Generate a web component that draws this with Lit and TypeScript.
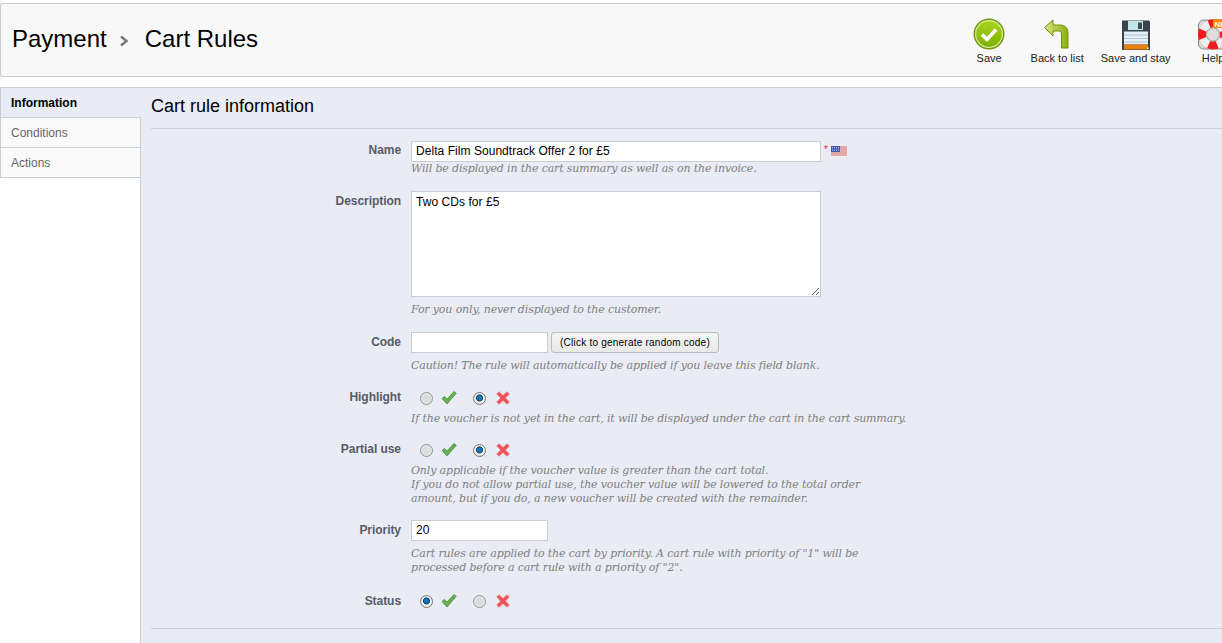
import { LitElement, html, css, svg } from "lit";
import { customElement } from "lit/decorators.js";

const saveIcon = svg`<svg class="ico" width="32" height="32" viewBox="0 0 32 32">
<defs><linearGradient id="sg" x1="0" y1="0" x2="0" y2="1"><stop offset="0" stop-color="#a9d21c"/><stop offset="1" stop-color="#7fb000"/></linearGradient></defs>
<circle cx="16" cy="16" r="15.500" fill="#6d9a0a"/><circle cx="16" cy="16" r="14" fill="#d8e9a0"/><circle cx="16" cy="16" r="12.800" fill="url(#sg)"/>
<path d="M9 16.500l5 5 9-10" fill="none" stroke="#fff" stroke-width="3.600"/></svg>`;
const backIcon = svg`<svg class="ico" width="32" height="32" viewBox="0 0 32 32">
<defs><linearGradient id="bg" x1="0" y1="0" x2="1" y2="0"><stop offset="0" stop-color="#d6e680"/><stop offset="1" stop-color="#88b010"/></linearGradient></defs>
<path d="M3.500 9.500L12 2v5h7c5 0 8 3 8 8v15h-6.500V16c0-2-1-3-3-3H12v5z" fill="url(#bg)" stroke="#6f8f10" stroke-width="1"/></svg>`;
const diskIcon = svg`<svg class="ico" width="32" height="32" viewBox="0 0 32 32"><g transform="translate(0 1.500)">
<path d="M2 1h27l1 1v28l-1 1H3l-1-1z" fill="#3a424c"/>
<rect x="8" y="1.500" width="15" height="9" fill="#bfe6ea"/><rect x="18" y="3" width="4" height="6.500" fill="#3f4a52"/>
<rect x="4" y="12" width="24" height="13" fill="#e6eef6"/>
<path d="M4 15.500h24M4 19h24M4 22.500h24" stroke="#a9c2de" stroke-width="1"/>
<rect x="4" y="25" width="24" height="5" fill="#e8820e"/>
<rect x="27" y="28" width="1.500" height="1.500" fill="#fff"/></g></svg>`;
const helpIcon = svg`<svg class="ico" width="32" height="32" viewBox="0 0 32 32">
<rect x="1.500" y="2" width="29" height="29" rx="5" fill="#d9d9d9" stroke="#8a8a8a"/>
<circle cx="16" cy="16.500" r="11" fill="none" stroke="#ee1c1c" stroke-width="8"/>
<circle cx="16" cy="16.500" r="11" fill="none" stroke="#eee" stroke-width="8" stroke-dasharray="8.640 8.640" stroke-dashoffset="-4.320"/>
<circle cx="16" cy="16.500" r="6.500" fill="#dcdcdc" stroke="#a8a8a8" stroke-width="1"/>
<rect x="16" y="1" width="16" height="9" rx="1.500" fill="#f58a00"/>
<text x="17.500" y="8.500" font-family="Liberation Sans" font-weight="700" font-size="8" fill="#fff">NEW</text></svg>`;
const checkIcon = svg`<svg class="mark" width="16" height="14" viewBox="0 0 16 14"><path d="M1 7.500l2.500-2L6 8l7-7.500 2.300 1.800L6 13z" fill="#62b14e" stroke="#4e8f3c" stroke-width=".8"/></svg>`;
const crossIcon = svg`<svg class="x" width="14" height="14" viewBox="0 0 14 14"><path d="M3 .7L7 4.600 11 .7l2.300 2.300L9.400 7l3.900 4-2.300 2.300L7 9.400l-4 3.900L.7 11l3.900-4L.7 3z" fill="#f4525a" stroke="#e8646a" stroke-width=".5"/></svg>`;
const flagIcon = svg`<svg width="16" height="11" viewBox="0 0 16 11"><rect width="16" height="11" fill="#f4f0f0"/>
<path d="M0 1h16M0 3h16M0 5h16M0 7h16M0 9h16" stroke="#d0605c" stroke-width="1"/><rect width="9" height="6" fill="#3f55b5"/>
<path d="M1 1.500h7M1 3h7M1 4.500h7" stroke="#d8def5" stroke-width=".7" stroke-dasharray="1 1"/></svg>`;

@customElement("app-root")
export class AppRoot extends LitElement {
  static styles = css`
    :host { display: block; width: 1222px; height: 643px; overflow: hidden; background: #fff; font-family: "Liberation Sans", Arial, sans-serif; color: #000; }
    .toolbar { margin-top: 3px; height: 74px; box-sizing: border-box; border: 1px solid #ccc; border-right: 0; border-radius: 3px 0 0 3px; background: #f8f8f8; display: flex; align-items: center; justify-content: space-between; }
    .crumbs { display: flex; align-items: center; padding: 0 0 2px 11px; font-size: 24px; color: #000; }
    .sep { width: 10px; height: 12px; margin: 3px 16px 0 12px; }
    .actions { display: flex; margin-right: -25px; padding-top: 3px; }
    .act { min-width: 68px; box-sizing: border-box; padding: 0 8.500px; display: flex; flex-direction: column; align-items: center; font-size: 11px; line-height: 13px; color: #222; }
    .act:first-child { min-width: 66px; }
    .ico { display: block; margin-bottom: 2px; }
    .main { margin-top: 10px; display: flex; height: 556px; }
    .side { width: 141px; box-sizing: border-box; border-right: 1px solid #ccced7; flex: none; }
    .tab { height: 30px; box-sizing: border-box; border: 1px solid #ccced7; border-width: 0 0 1px 1px; background: #fafafa; padding: 1px 10px 0; font-size: 12px; line-height: 29px; color: #666; }
    .tab.on { height: 31px; background: #e9ecf4; font-weight: 700; color: #000; border-top: 1px solid #ccced7; margin-right: -1px; }
    .panel { flex: 1; background: #e9ecf4; border-top: 1px solid #ccced7; padding-left: 10px; }
    h2 { margin: 0; height: 41px; box-sizing: border-box; border-bottom: 1px solid #ccced7; font-weight: 400; font-size: 18px; line-height: 37px; }
    form { padding-top: 12px; }
    .row { display: flex; margin-bottom: 15px; }
    .row.t14 { margin-bottom: 14px; }
    .row.t16 { margin-bottom: 16px; }
    .row.last { margin-bottom: 18px; }
    .lab { width: 250px; text-align: right; font-size: 12px; font-weight: 700; line-height: 18px; letter-spacing: -.05px; color: #585a69; flex: none; }
    .lab.p1 { padding-top: 1px; }
    .body { margin-left: 10px; }
    .line { display: flex; align-items: center; height: 21px; }
    input, textarea { box-sizing: border-box; margin: 0; border: 1px solid #ccc; background: #fff; font: 12px "Liberation Sans", Arial, sans-serif; letter-spacing: .05px; color: #000; padding: 0 4px 2px; display: block; border-radius: 0; outline: none; }
    .long { width: 410px; height: 21px; }
    textarea { width: 410px; height: 106px; padding: 3px 4px; }
    .short { width: 137px; height: 21px; }
    button { margin: 0 0 0 3px; width: 168px; height: 21px; box-sizing: border-box; border: 1px solid #bbb; border-radius: 3px; background: linear-gradient(#f6f6f6, #e8e8e8); font: 10px "Liberation Sans", Arial, sans-serif; letter-spacing: .23px; color: #000; padding: 0; }
    .req { color: #e03030; font-size: 10px; margin: -4px 3px 0 3px; }
    .hint { margin-top: 6px; font: italic 11px/14px "DejaVu Serif", Georgia, serif; letter-spacing: -.15px; color: #7f7f7f; white-space: nowrap; }
    .hint.h0 { margin-top: 0; }
    .hint.h5 { margin-top: 5px; }
    .radio { width: 13px; height: 13px; border-radius: 50%; box-sizing: border-box; border: 1px solid #939393; background: radial-gradient(circle at 50% 50%, #dcdcdc 0 45%, #f8f8f8 100%); flex: none; }
    .radio.on { background: radial-gradient(circle at 50% 45%, #1576b4 0 26%, #0c3e66 38%, #f2f2f2 48%, #dcdcdc 100%); border-color: #777; }
    .radios { height: 18px; margin-top: 1px; padding-left: 9px; }
    .mark { margin-left: 8px; }
    .mark + .radio { margin-left: 16px; }
    .x { margin-left: 10px; display: block; flex: none; }
    .rule { height: 1px; background: #ccced7; }
  `;

  private radios(yes: boolean) {
    return html`<div class="line radios">
      <span class="radio ${yes ? "on" : ""}"></span>${checkIcon}
      <span class="radio ${yes ? "" : "on"}"></span>${crossIcon}
    </div>`;
  }

  render() {
    return html`
      <div class="toolbar">
        <div class="crumbs">
          <span>Payment</span>
          <svg class="sep" viewBox="0 0 10 12"><path d="M2 1.500L7.500 6 2 10.500" fill="none" stroke="#777" stroke-width="2.400"/></svg>
          <span>Cart Rules</span>
        </div>
        <div class="actions">
          <div class="act">${saveIcon}<span>Save</span></div>
          <div class="act">${backIcon}<span>Back to list</span></div>
          <div class="act">${diskIcon}<span>Save and stay</span></div>
          <div class="act">${helpIcon}<span>Help</span></div>
        </div>
      </div>
      <div class="main">
        <div class="side">
          <div class="tab on">Information</div>
          <div class="tab">Conditions</div>
          <div class="tab">Actions</div>
        </div>
        <div class="panel">
          <h2>Cart rule information</h2>
          <form>
            <div class="row">
              <div class="lab">Name</div>
              <div class="body">
                <div class="line"><input class="long" .value=${"Delta Film Soundtrack Offer 2 for £5"} /><span class="req">*</span>${flagIcon}</div>
                <div class="hint h0">Will be displayed in the cart summary as well as on the invoice.</div>
              </div>
            </div>
            <div class="row">
              <div class="lab p1">Description</div>
              <div class="body">
                <textarea .value=${"Two CDs for £5"}></textarea>
                <div class="hint">For you only, never displayed to the customer.</div>
              </div>
            </div>
            <div class="row">
              <div class="lab p1">Code</div>
              <div class="body">
                <div class="line"><input class="short" /><button type="button">(Click to generate random code)</button></div>
                <div class="hint">Caution! The rule will automatically be applied if you leave this field blank.</div>
              </div>
            </div>
            <div class="row t14">
              <div class="lab">Highlight</div>
              <div class="body">
                ${this.radios(false)}
                <div class="hint h5">If the voucher is not yet in the cart, it will be displayed under the cart in the cart summary.</div>
              </div>
            </div>
            <div class="row t14">
              <div class="lab">Partial use</div>
              <div class="body">
                ${this.radios(false)}
                <div class="hint h5">Only applicable if the voucher value is greater than the cart total.<br />If you do not allow partial use, the voucher value will be lowered to the total order<br />amount, but if you do, a new voucher will be created with the remainder.</div>
              </div>
            </div>
            <div class="row t16">
              <div class="lab p1">Priority</div>
              <div class="body">
                <input class="short" .value=${"20"} />
                <div class="hint">Cart rules are applied to the cart by priority. A cart rule with priority of "1" will be<br />processed before a cart rule with a priority of "2".</div>
              </div>
            </div>
            <div class="row last">
              <div class="lab p1">Status</div>
              <div class="body">${this.radios(true)}</div>
            </div>
          </form>
          <div class="rule"></div>
        </div>
      </div>
    `;
  }
}
